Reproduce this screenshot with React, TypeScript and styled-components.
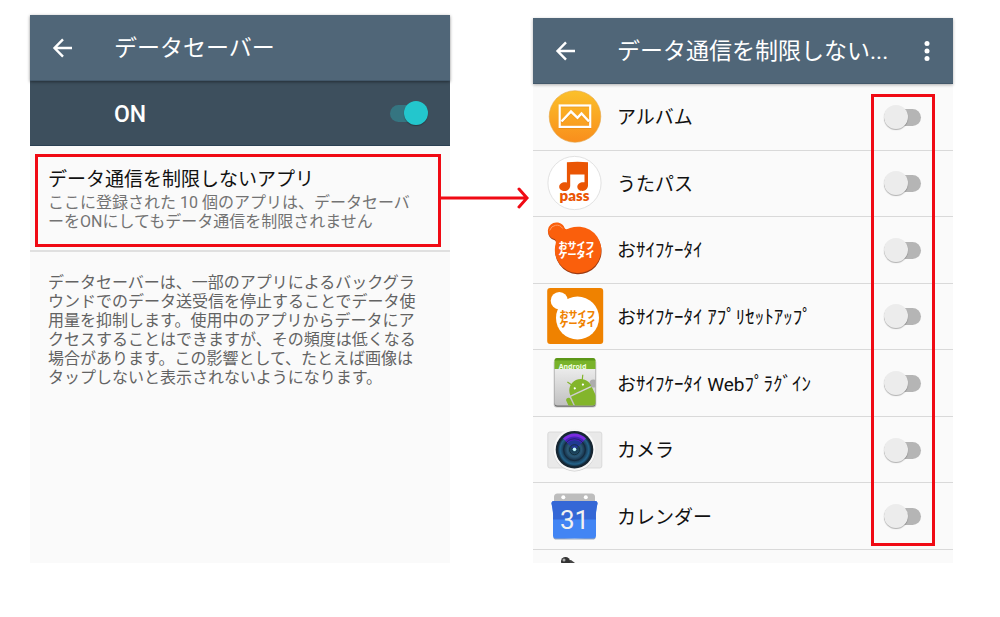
import React from 'react';
import styled, { createGlobalStyle } from 'styled-components';

const GlobalStyle = createGlobalStyle`
  *, *::before, *::after { box-sizing: border-box; }
  body {
    margin: 0;
    background: #fff;
    color: #111;
    font-family: Roboto, "Noto Sans CJK JP", sans-serif;
  }
  h1, h2, p, ul { margin: 0; padding: 0; font-weight: 400; }
`;

const Page = styled.main`
  display: grid;
  grid-template-columns: 1fr 1fr;
  gap: 83px;
  padding: 15px 47px 54px 30px;
`;

const Screen = styled.section<{ $offset?: number }>`
  position: relative;
  display: flex;
  flex-direction: column;
  min-width: 0;
  margin-top: ${(p) => p.$offset ?? 0}px;
  background: #fafafa;
`;

const AppBar = styled.header<{ $shadow: string }>`
  position: relative;
  z-index: 1;
  display: flex;
  align-items: center;
  height: 66px;
  padding: 0 14px 0 20px;
  background: #506678;
  color: #fff;
  border-bottom: 1px solid #43586a;
  box-shadow: 0 1px 3px ${(p) => p.$shadow};
`;

const IconButton = styled.button`
  display: flex;
  flex: none;
  align-items: center;
  justify-content: center;
  width: 24px;
  height: 24px;
  padding: 0;
  border: 0;
  background: none;
  color: inherit;
`;

const BarTitle = styled.h1`
  flex: 1;
  min-width: 0;
  padding: 3px 0 0 40px;
  font-size: 23px;
  line-height: 32px;
  white-space: nowrap;
`;

const MasterRow = styled.div`
  display: flex;
  align-items: center;
  justify-content: space-between;
  height: 65px;
  padding: 0 22px 0 84px;
  background: #3d4f5d;
  border-bottom: 1px solid #2a4052;
  color: #fff;
`;

const MasterLabel = styled.label`
  padding-top: 3px;
  font-size: 23px;
  line-height: 32px;
  font-weight: 500;
`;

const Switch = styled.input`
  appearance: none;
  position: relative;
  flex: none;
  width: 38px;
  height: 24px;
  margin: 0;
  &::before {
    content: "";
    position: absolute;
    top: 4px;
    left: 0;
    width: 37px;
    height: 17px;
    border-radius: 9px;
    background: #b5b5b5;
  }
  &::after {
    content: "";
    position: absolute;
    top: 0;
    left: 0;
    width: 24px;
    height: 24px;
    border-radius: 50%;
    background: #ececec;
    box-shadow: 0 1px 1px rgba(0, 0, 0, 0.3);
  }
  &:checked::before { background: #357581; }
  &:checked::after { left: 14px; background: #23c6cd; }
`;

const SettingSlot = styled.div`
  padding: 8px 9px 3px 5px;
  border-bottom: 2px solid #e0e0e0;
`;

const Setting = styled.button`
  display: block;
  width: 100%;
  padding: 9px 8px 13px 10px;
  border: 3px solid #f00a14;
  background: none;
  font-family: inherit;
  text-align: left;
  white-space: nowrap;
`;

const SettingTitle = styled.span`
  display: block;
  font-size: 19px;
  line-height: 27px;
  color: #111;
`;

const SettingSummary = styled.span`
  display: block;
  font-size: 16px;
  line-height: 19px;
  color: #737373;
`;

const Description = styled.p`
  padding: 21px 8px 0 18px;
  font-size: 16px;
  line-height: 19px;
  white-space: nowrap;
  color: #636363;
`;

const Rows = styled.ul`
  display: grid;
  grid-template-rows: repeat(7, 1fr);
  min-height: 466px;
  list-style: none;
`;

const Row = styled.li`
  display: flex;
  align-items: center;
  padding: 0 31px 0 14px;
  border-bottom: 1px solid #d9d9d9;
`;

const RowLabel = styled.label`
  flex: 1;
  padding: 2px 0 0 13px;
  font-size: 19px;
  line-height: 27px;
`;

const AppIcon = styled.svg`
  flex: none;
  width: 57px;
  height: 60px;
`;

const NextRow = styled.div`
  height: 13px;
  padding-left: 14px;
  overflow: hidden;
`;

const SwitchFrame = styled.div`
  position: absolute;
  z-index: 2;
  top: 76px;
  right: 18px;
  bottom: 17px;
  width: 64px;
  border: 3px solid #f00a14;
  pointer-events: none;
`;

const Connector = styled.svg`
  position: absolute;
  top: 172px;
  left: calc(100% - 10px);
  width: 90px;
  height: 22px;
`;

const Back = () => (
  <svg width="24" height="24" viewBox="0 0 24 24" fill="none" stroke="currentColor" strokeWidth="2.4">
    <path d="M22 12H4.500M13 3.300L4.500 12l8.500 8.700" />
  </svg>
);

const AlbumIcon = () => (
  <>
    <defs>
      <linearGradient id="album" x1="0" y1="0" x2="0" y2="1">
        <stop offset="0" stopColor="#fbc02a" />
        <stop offset="1" stopColor="#f98e1c" />
      </linearGradient>
    </defs>
    <circle cx="28" cy="29.500" r="25.8" fill="url(#album)" stroke="#e3a64a" strokeWidth=".6" />
    <rect x="12.700" y="19.300" width="30.500" height="21.400" fill="none" stroke="#d97a10" strokeWidth="2" opacity=".5" />
    <rect x="12.700" y="18.500" width="30.500" height="21.400" fill="none" stroke="#fff" strokeWidth="2.200" />
    <path d="M14.500 35.500l9.500-10 6.500 6.300 4-4.300 7.500 8" fill="none" stroke="#d97a10" strokeWidth="2" opacity=".5" />
    <path d="M14.500 34.500l9.500-10 6.500 6.300 4-4.300 7.500 8" fill="none" stroke="#fff" strokeWidth="2.500" />
  </>
);

const UtaPassIcon = () => (
  <>
    <circle cx="27.500" cy="30" r="26.600" fill="#fff" stroke="#e2e2e2" strokeWidth="1" />
    <path
      d="M19.900 9.300q10.500-1.200 21.100 0v23.200c0 3-2.500 5.400-5.400 5.400s-5.300-1.800-5.300-4.200c0-3 3.700-5.200 7.200-4.400V21.500H23.200v11.200c0 3-2.600 5.300-5.600 5.300s-5.400-1.800-5.400-4.300c0-3.200 4-5.300 7.700-4.200z"
      fill="#ea5504"
    />
    <text x="27.500" y="48" textAnchor="middle" fontFamily="Lato, sans-serif" fontWeight="800" fontSize="15" fill="#ea5504">pass</text>
  </>
);

const WalletText = ({ x, y, fill }: { x: number; y: number; fill: string }) => (
  <text fill={fill} fontFamily="Noto Sans CJK JP, sans-serif" fontWeight="900" fontSize="9" textAnchor="middle">
    <tspan x={x} y={y}>おサイフ</tspan>
    <tspan x={x} y={y + 9}>ケータイ</tspan>
  </text>
);

const WalletShape = ({ fill }: { fill: string }) => (
  <path
    d="M9.500 2.600c4.400 0 7.200 2.600 8.300 5.800 1.200 1.400 3.200.6 5.200-.3A23.200 23.200 0 1 1 8.600 24c.6-2.300.4-4-1.200-5A8.300 8.300 0 0 1 9.500 2.600z"
    fill={fill}
  />
);

const WalletIcon = () => (
  <>
    <g transform="translate(0.300 1.300)"><WalletShape fill="#9b3a12" /></g>
    <WalletShape fill="#fa5f0c" />
    <path d="M2.700 10.500a7.200 7.200 0 0 1 13-2" fill="none" stroke="#ff9a62" strokeWidth="1" />
    <WalletText x={29.5} y={29} fill="#fff" />
  </>
);

const WalletSetupIcon = () => (
  <>
    <rect x=".2" y="2" width="56" height="56" rx="3" fill="#ef8200" />
    <circle cx="12.300" cy="14.700" r="8.600" fill="#fff" />
    <circle cx="30.500" cy="32" r="21.500" fill="#fff" />
    <path d="M8.500 22c4-.5 4.500 2 2.500 6l11-15c-3 1-3.500-1-3-3z" fill="#fff" />
    <WalletText x={30.5} y={32} fill="#ef8200" />
  </>
);

const AndroidIcon = () => (
  <>
    <defs>
      <linearGradient id="paper" x1="0" y1="0" x2="0" y2="1">
        <stop offset="0" stopColor="#f8f8f8" />
        <stop offset="1" stopColor="#c0c0c0" />
      </linearGradient>
      <clipPath id="paperClip"><rect x="7.500" y="5" width="41" height="47.500" rx="3" /></clipPath>
    </defs>
    <rect x="6.700" y="6.500" width="42.600" height="48" rx="3" fill="#888" opacity=".45" />
    <rect x="7.500" y="7" width="41" height="46.800" rx="3" fill="#6f6f6f" />
    <rect x="7.500" y="5" width="41" height="47.500" rx="3" fill="url(#paper)" />
    <g clipPath="url(#paperClip)">
      <rect x="7" y="5" width="42" height="11" fill="#79b32a" />
      <rect x="7" y="5" width="42" height="2.500" fill="#5b9617" />
      <circle cx="46.500" cy="30.500" r="4" fill="#adadad" />
      <g transform="rotate(-25 34 38)" fill="#83b52b">
        <path d="M22.500 37.500a11.500 11.500 0 0 1 23 0zM22.500 39h23v24h-23zM16.500 41a2.300 2.300 0 0 1 4.600 0v11a2.300 2.300 0 0 1-4.600 0z" />
        <path d="M28.500 29l-3-5M39.500 29l3-5" stroke="#83b52b" strokeWidth="1.200" />
        <circle cx="29.500" cy="33" r="1.100" fill="#fff" />
        <circle cx="38.500" cy="33" r="1.100" fill="#fff" />
      </g>
    </g>
    <text x="25.500" y="16" textAnchor="middle" fontFamily="Noto Sans, sans-serif" fontWeight="700" fontSize="7" fill="#f2ffe0">Android</text>
  </>
);

const CameraIcon = () => (
  <>
    <defs>
      <radialGradient id="lens">
        <stop offset="0" stopColor="#88dce8" />
        <stop offset=".13" stopColor="#173c55" />
        <stop offset=".42" stopColor="#2b5876" />
        <stop offset=".62" stopColor="#173249" />
        <stop offset=".85" stopColor="#24638a" />
        <stop offset="1" stopColor="#10212f" />
      </radialGradient>
    </defs>
    <rect x=".8" y="12" width="54" height="36" rx="2" fill="#e9e9e9" stroke="#d4d4d4" strokeWidth=".8" />
    <circle cx="27.500" cy="30.400" r="21" fill="#cfcfcf" />
    <circle cx="27.500" cy="29.700" r="21" fill="#f8f8f8" />
    <circle cx="27.500" cy="29.700" r="18.800" fill="#172632" />
    <circle cx="27.500" cy="29.700" r="17" fill="url(#lens)" />
    <path d="M16 18.500a16 16 0 0 1 23 0L27.500 29.700z" fill="#7a2be0" />
    <path d="M18 20.500a13.500 13.500 0 0 1 19 0L27.500 29.700z" fill="#4424b8" />
    <path d="M20.500 23a10 10 0 0 1 14 0l-7 6.700z" fill="#203a94" />
    <circle cx="27.500" cy="29.700" r="11" fill="none" stroke="#101c2b" strokeWidth="1" opacity=".5" />
    <circle cx="27.500" cy="29.700" r="5" fill="none" stroke="#14303f" strokeWidth="1" />
    <circle cx="27.500" cy="29.200" r="1.700" fill="#c6fbff" />
  </>
);

const CalendarIcon = () => (
  <>
    <path d="M7 17V11q0-3.500 3.500-3.500h34q3.500 0 3.500 3.500v6z" fill="#bdbdbd" />
    <circle cx="16.300" cy="11.200" r="2" fill="#fff" />
    <circle cx="38.800" cy="11.200" r="2" fill="#fff" />
    <path d="M6.500 50.500q21 4 42 0v1q0 2-3 2h-36q-3 0-3-2z" fill="#9aa7bb" />
    <path d="M7 15h41q3 0 2.400 3-2 9-1.400 14v17.500q0 3-3 3H9q-3 0-3-3V32q.6-5-1.400-14Q4 15 7 15z" fill="#4285f4" />
    <path d="M7 15h41q3 0 2.400 3-2 9-1.400 15.500H6Q6.600 27 4.600 18 4 15 7 15z" fill="#3467d6" />
    <text x="27.500" y="42.500" textAnchor="middle" fontFamily="Roboto, sans-serif" fontSize="26" fill="#f1f1f1">31</text>
  </>
);

const apps = [
  { id: 'album', name: 'アルバム', Icon: AlbumIcon },
  { id: 'utapass', name: 'うたパス', Icon: UtaPassIcon },
  { id: 'wallet', name: 'おｻｲﾌｹｰﾀｲ', Icon: WalletIcon },
  { id: 'wallet-setup', name: 'おｻｲﾌｹｰﾀｲ ｱﾌﾟﾘｾｯﾄｱｯﾌﾟ', Icon: WalletSetupIcon },
  { id: 'wallet-web', name: 'おｻｲﾌｹｰﾀｲ Webﾌﾟﾗｸﾞｲﾝ', Icon: AndroidIcon },
  { id: 'camera', name: 'カメラ', Icon: CameraIcon },
  { id: 'calendar', name: 'カレンダー', Icon: CalendarIcon },
];

export default function App() {
  return (
    <>
      <GlobalStyle />
      <Page>
        <Screen>
          <AppBar $shadow="rgba(0, 0, 0, 0.45)">
            <IconButton aria-label="戻る"><Back /></IconButton>
            <BarTitle>データセーバー</BarTitle>
          </AppBar>
          <MasterRow>
            <MasterLabel htmlFor="saver">ON</MasterLabel>
            <Switch id="saver" type="checkbox" role="switch" defaultChecked />
          </MasterRow>
          <SettingSlot>
            <Setting>
              <SettingTitle>データ通信を制限しないアプリ</SettingTitle>
              <SettingSummary>
                ここに登録された 10 個のアプリは、データセーバ<br />
                ーをONにしてもデータ通信を制限されません
              </SettingSummary>
            </Setting>
          </SettingSlot>
          <Description>
            データセーバーは、一部のアプリによるバックグラ<br />
            ウンドでのデータ送受信を停止することでデータ使<br />
            用量を抑制します。使用中のアプリからデータにア<br />
            クセスすることはできますが、その頻度は低くなる<br />
            場合があります。この影響として、たとえば画像は<br />
            タップしないと表示されないようになります。
          </Description>
          <Connector viewBox="0 0 90 22" fill="none" stroke="#f00a14" strokeWidth="3" strokeLinecap="round" aria-hidden="true">
            <path d="M1 11H86M79 2l8 9-8 9" />
          </Connector>
        </Screen>

        <Screen $offset={3}>
          <AppBar $shadow="rgba(0, 0, 0, 0.3)">
            <IconButton aria-label="戻る"><Back /></IconButton>
            <BarTitle>データ通信を制限しない...</BarTitle>
            <IconButton aria-label="その他">
              <svg width="24" height="24" viewBox="0 0 24 24" fill="currentColor">
                <circle cx="12" cy="4.500" r="2.500" />
                <circle cx="12" cy="12" r="2.500" />
                <circle cx="12" cy="19.500" r="2.500" />
              </svg>
            </IconButton>
          </AppBar>
          <Rows>
            {apps.map(({ id, name, Icon }) => (
              <Row key={id}>
                <AppIcon viewBox="0 0 57 60" aria-hidden="true"><Icon /></AppIcon>
                <RowLabel htmlFor={id}>{name}</RowLabel>
                <Switch id={id} type="checkbox" role="switch" />
              </Row>
            ))}
          </Rows>
          <NextRow>
            <svg width="57" height="13" viewBox="0 0 57 13" aria-hidden="true">
              <path d="M17 9l7-1 4 3 1 2H20z" fill="#444" />
              <circle cx="18.500" cy="9.500" r="4.500" fill="#333" />
              <circle cx="17" cy="8" r="1.500" fill="#aaa" />
            </svg>
          </NextRow>
          <SwitchFrame />
        </Screen>
      </Page>
    </>
  );
}
